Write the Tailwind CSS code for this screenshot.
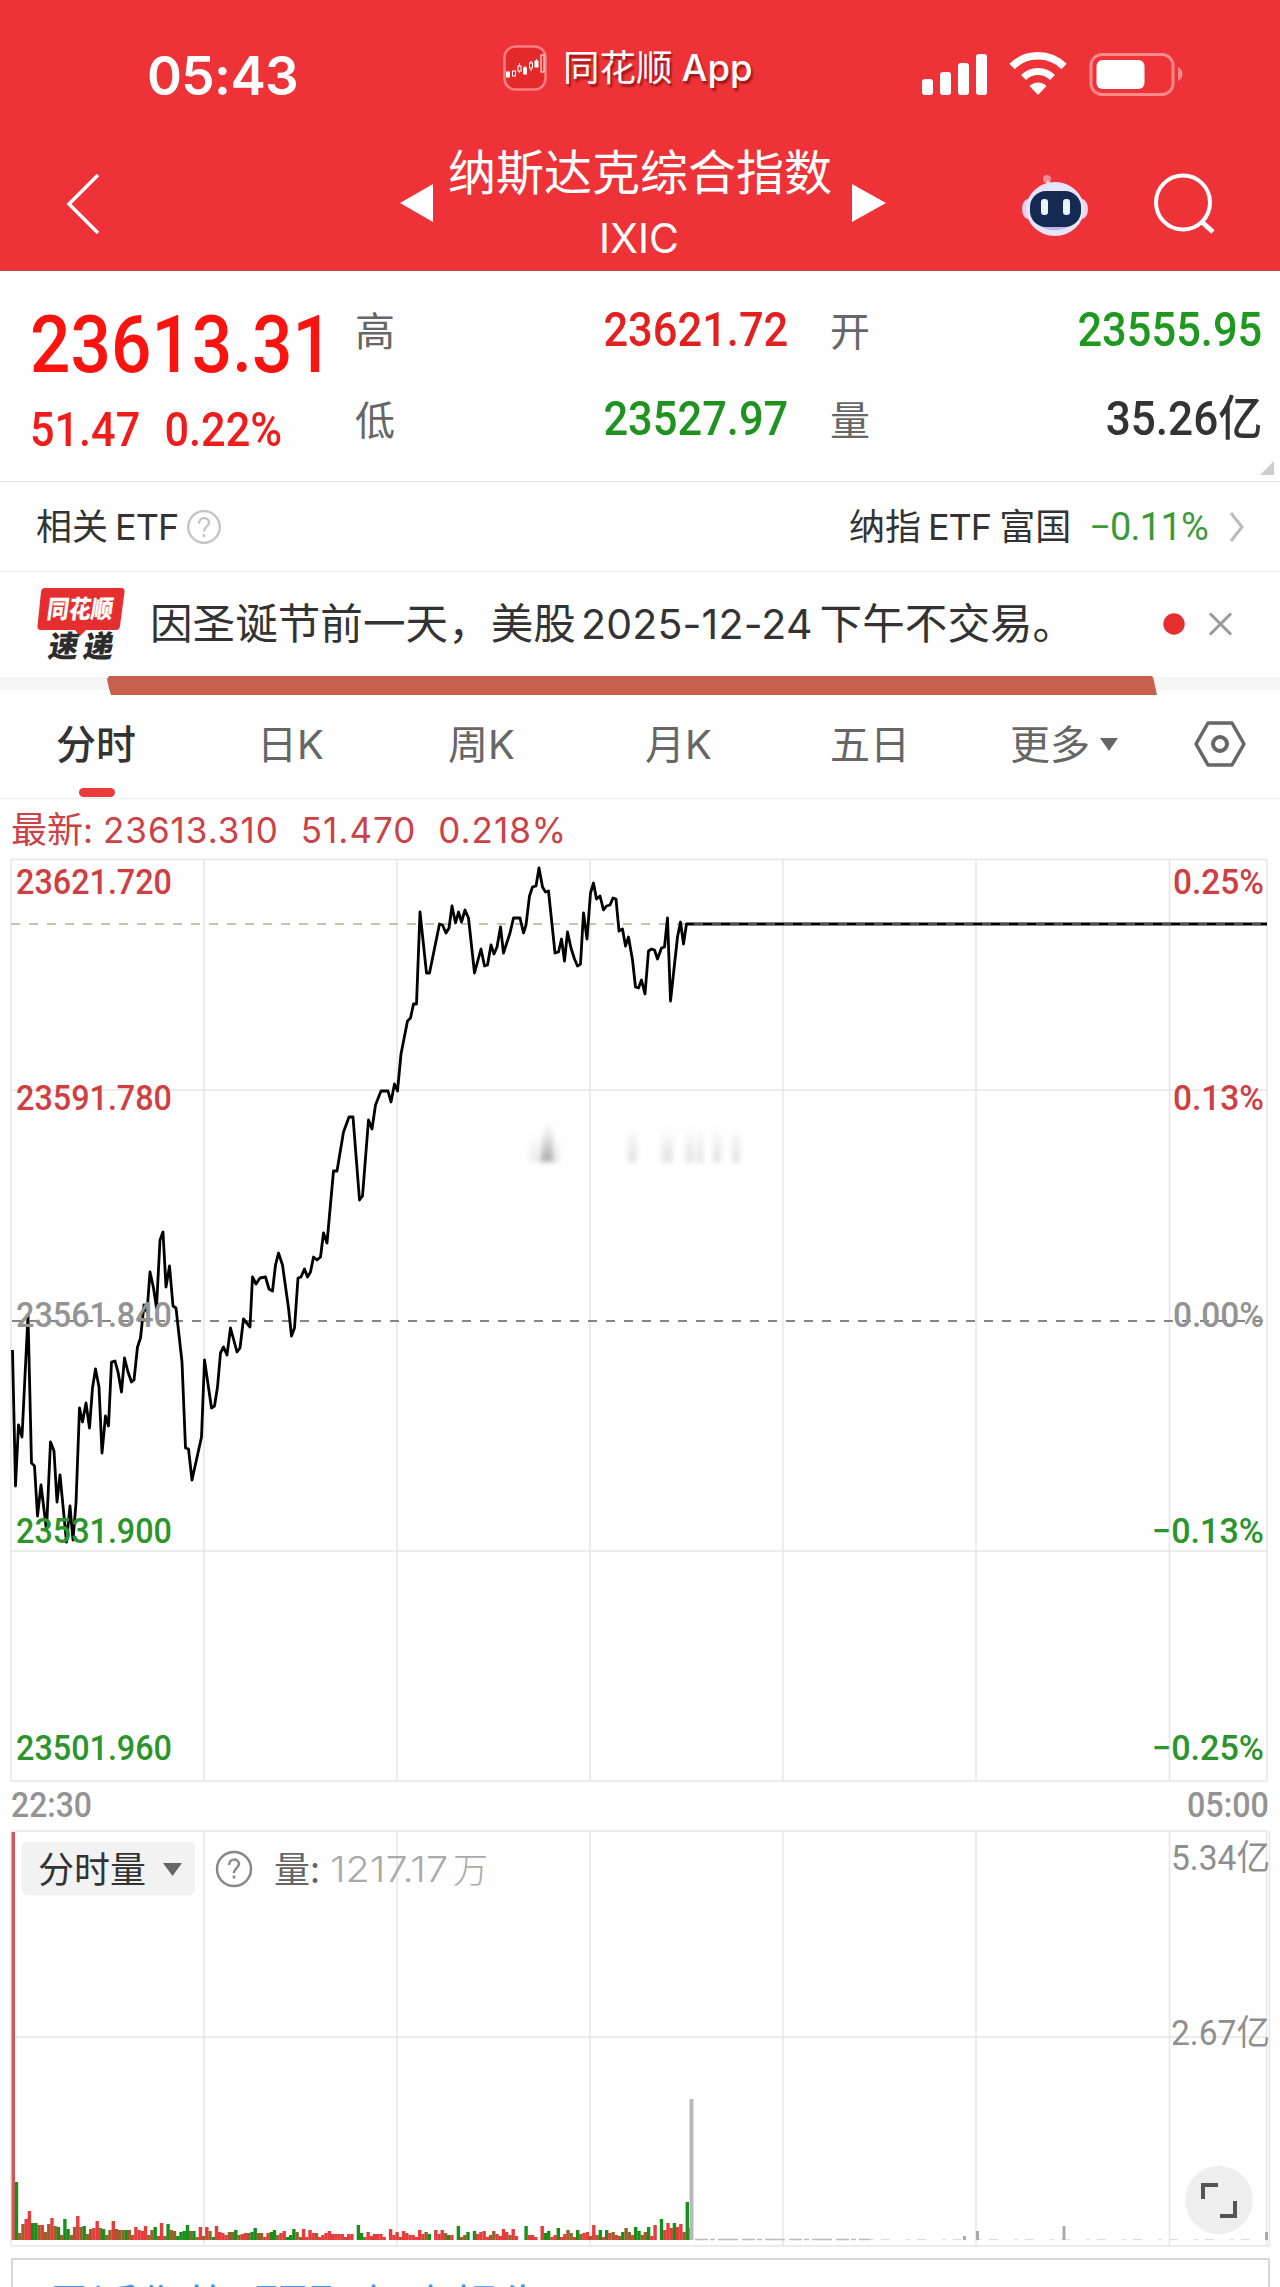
<!DOCTYPE html>
<html lang="zh-CN">
<head>
    <meta charset="UTF-8">
    <meta name="viewport" content="width=device-width, initial-scale=1.0">
    <title>纳斯达克综合指数 IXIC</title>
    <script src="https://cdn.jsdelivr.net/npm/@tailwindcss/browser@4"></script>
</head>
<body class="w-[1280px] h-[2287px] overflow-hidden bg-[#fefefe] font-['Inter','Noto_Sans_CJK_SC',sans-serif] text-[#333]">

    <!-- Header -->
    <header class="h-[271px] bg-[#ed3337] border-b border-[#c2474a] text-white">
        <!-- Status bar -->
        <div class="h-[148px] flex items-start">
            <div class="w-[354px] ml-[147px] mt-[49px] text-[53px] leading-[54px] font-semibold tracking-[-0.600px]">05:43</div>
            <div class="w-[420px] flex items-center mt-[41px] ml-[2px]">
                <svg class="w-[44px] h-[46px] mt-[2px]" viewBox="0 0 44 46" fill="none">
                    <rect x="1.5" y="1.5" width="41" height="43" rx="11" fill="#e22a2a" stroke="#ff8080" stroke-width="2.5"/>
                    <g stroke="#fff" stroke-width="1">
                        <rect x="3.5" y="27" width="3" height="5" fill="#fff"/>
                        <rect x="9.5" y="26" width="3" height="5"/>
                        <path d="M16.500 18v3M16.500 26v2M22 21v2M28 16v2M28 24v2M33.500 14v2"/>
                        <rect x="15" y="21" width="3" height="5"/>
                        <rect x="20.500" y="23" width="3" height="6" fill="#fff"/>
                        <rect x="26.500" y="18" width="3" height="5"/>
                        <rect x="32" y="16" width="3" height="6" fill="#fff"/>
                        <rect x="38" y="10" width="3" height="17"/>
                    </g>
                </svg>
                <div class="ml-[16px] mt-[2px] text-[36.500px] leading-[50px] whitespace-nowrap [text-shadow:2px_3px_2px_rgba(110,0,0,0.6)]">同花顺<span class="ml-[9px] font-medium">App</span></div>
            </div>
            <svg class="w-[264px] h-[46px] mt-[52px] -ml-[3px]" viewBox="920 52 264 46" fill="#fff">
                <rect x="922" y="79" width="11" height="16" rx="3"/>
                <rect x="940" y="72" width="11" height="23" rx="3"/>
                <rect x="958" y="63" width="11" height="32" rx="3"/>
                <rect x="976" y="54" width="11" height="41" rx="3"/>
                <path d="M1038 95l-8.500-9a12 12 0 0 1 17 0z"/>
                <path d="M1023.500 77.500a20.500 20.500 0 0 1 29 0" fill="none" stroke="#fff" stroke-width="7"/>
                <path d="M1012 66.500a37 37 0 0 1 52 0" fill="none" stroke="#fff" stroke-width="7.500"/>
                <rect x="1091" y="54.500" width="82" height="40" rx="11" fill="none" stroke="#ff8a8a" stroke-width="3"/>
                <rect x="1096.500" y="60" width="48" height="29" rx="6"/>
                <path d="M1178 67c6 3 6 11 0 14z" fill="#ff8a8a"/>
            </svg>
        </div>
        <!-- Title bar -->
        <div class="h-[122px] flex items-start">
            <svg class="w-[36px] h-[66px] mt-[23px] ml-[64px]" viewBox="0 0 36 66" fill="none" stroke="#fff" stroke-width="3.500"><path d="M34 4L5 33L34 62"/></svg>
            <svg class="w-[34px] h-[40px] mt-[35px] ml-[300px]" viewBox="0 0 34 40" fill="#fff"><path d="M0 20L33 1V39z"/></svg>
            <div class="w-[382px] ml-[14px] text-center whitespace-nowrap">
                <div class="text-[48px] leading-[50px]">纳斯达克综合指数</div>
                <div class="text-[41px] leading-[46px] mt-[17px]">IXIC</div>
            </div>
            <svg class="w-[34px] h-[40px] mt-[35px] ml-[22px]" viewBox="0 0 34 40" fill="#fff"><path d="M34 20L0 1V39z"/></svg>
            <svg class="w-[68px] h-[64px] mt-[25px] ml-[135px]" viewBox="0 0 68 64">
                <circle cx="26" cy="6" r="4" fill="#f28a94"/>
                <path d="M26 8l4 6" stroke="#f5c3cd" stroke-width="3"/>
                <ellipse cx="7" cy="36" rx="6" ry="10" fill="#e9c9ec"/>
                <ellipse cx="61" cy="36" rx="6" ry="10" fill="#f3d3e8"/>
                <ellipse cx="34" cy="36" rx="29" ry="27" fill="#e6e4fa"/>
                <path d="M12 46a26 24 0 0 0 44 0q-20 14-44 0z" fill="#bfb4f0"/>
                <rect x="9" y="18" width="51" height="36" rx="16" fill="#152a52"/>
                <rect x="20" y="26" width="7" height="16" rx="3" fill="#e8f4ff"/>
                <rect x="42" y="26" width="7" height="16" rx="3" fill="#e8f4ff"/>
            </svg>
            <svg class="w-[64px] h-[64px] mt-[23px] ml-[63px]" viewBox="0 0 64 64" fill="none" stroke="#fff" stroke-width="4"><circle cx="31" cy="31.500" r="27"/><path d="M50 51l11 10" stroke-width="5"/></svg>
        </div>
    </header>

    <!-- Quote summary -->
    <section class="relative h-[211px] flex border-b border-[#e6e6e6] whitespace-nowrap font-['Roboto','Noto_Sans_CJK_SC',sans-serif]">
        <div class="w-[325px] ml-[30px] text-[#fb130f] font-medium">
            <div class="w-[320px] h-[80px] mt-[34px] text-[80px] leading-[80px] origin-left scale-x-[0.890]">23613.31</div>
            <div class="w-[300px] flex mt-[21px] gap-[27px] text-[48px] leading-[48px] origin-left scale-x-[0.900] text-[#ee1c1a]"><span>51.47</span><span>0.22%</span></div>
        </div>
        <div class="w-[433px] mt-[35px]">
            <div class="flex justify-between h-[48px] items-center"><span class="pt-[5px] text-[40px] leading-[48px] text-[#666]">高</span><span class="text-[48px] leading-[48px] origin-right scale-x-[0.905] font-medium text-[#e32020]">23621.72</span></div>
            <div class="flex justify-between h-[48px] items-center mt-[41px]"><span class="pt-[5px] text-[40px] leading-[48px] text-[#666]">低</span><span class="text-[48px] leading-[48px] origin-right scale-x-[0.905] font-medium text-[#1f921f]">23527.97</span></div>
        </div>
        <div class="w-[432px] mt-[35px] ml-[42px]">
            <div class="flex justify-between h-[48px] items-center"><span class="pt-[5px] text-[40px] leading-[48px] text-[#666]">开</span><span class="text-[48px] leading-[48px] origin-right scale-x-[0.905] font-medium text-[#1f981f]">23555.95</span></div>
            <div class="flex justify-between h-[48px] items-center mt-[41px]"><span class="pt-[5px] text-[40px] leading-[48px] text-[#666]">量</span><span class="text-[48px] leading-[48px] origin-right scale-x-[0.920] font-medium">35.26亿</span></div>
        </div>
        <svg class="absolute right-[6px] bottom-[6px] w-[14px] h-[14px]" viewBox="0 0 14 14" fill="#ccc"><path d="M14 0V14H0z"/></svg>
    </section>

    <!-- Related ETF -->
    <section class="h-[90px] flex items-center border-b border-[#eee] pl-[36px] pr-[35px] text-[35px] leading-[44px] whitespace-nowrap">
        <span class="text-[36px]">相关<span class="ml-[7px] tracking-[-1px]">ETF</span></span>
        <svg class="w-[36px] h-[36px] ml-[8px]" viewBox="0 0 36 36" fill="none" stroke="#c4c4c4" stroke-width="2.300"><circle cx="18" cy="18" r="15.800"/><path d="M13 14.500c0-7 10-7 10-1c0 4-5 4-5 9M18 25v3"/></svg>
        <span class="ml-auto text-[36px]">纳指<span class="ml-[7px] mr-[8px] tracking-[-1px]">ETF</span>富国</span>
        <span class="ml-[18px] font-['Roboto'] text-[38px] tracking-[-0.800px] text-[#3a9a3a]">−0.11%</span>
        <svg class="w-[16px] h-[32px] ml-[21px]" viewBox="0 0 16 32" fill="none" stroke="#bbb" stroke-width="3"><path d="M2 2l11 14L2 30"/></svg>
    </section>

    <!-- News flash -->
    <section class="relative h-[105px] flex items-start whitespace-nowrap">
        <svg class="w-[92px] h-[78px] mt-[14px] ml-[36px]" viewBox="36 586 92 78">
            <path d="M45 588H121q4 0 3.500 4L120 626q-.5 4-4 4H86l-6 6l-5-6H41q-4 0-3.500-4L41 592q.5-4 4-4z" fill="#e62e30"/>
            <text x="0" y="0" transform="translate(46 618) skewX(-8)" font-family="Noto Sans CJK SC" font-weight="900" font-size="25" fill="#fff" textLength="66" lengthAdjust="spacingAndGlyphs">同花顺</text>
            <text x="0" y="0" transform="translate(47 657) skewX(-10)" font-family="Noto Sans CJK SC" font-weight="900" font-size="30" fill="#2c2c2c" textLength="65" lengthAdjust="spacing">速递</text>
        </svg>
        <div class="ml-[22px] mt-[27px] text-[42.600px] leading-[50px]">因圣诞节前一天，美股<span class="ml-[5px] mr-[7px] text-[41px] tracking-[0.200px]">2025-12-24</span>下午不交易。</div>
        <svg class="absolute left-[1160px] top-[38px] w-[76px] h-[28px]" viewBox="0 0 76 28"><circle cx="14" cy="14" r="10.700" fill="#e63030"/><path d="M50 3.500l21 21M71 3.500l-21 21" stroke="#999" stroke-width="3"/></svg>
    </section>

    <!-- Divider with brush stroke -->
    <div class="relative h-[13px] bg-[#f5f5f5]">
        <svg class="absolute left-[106px] -top-[2px] w-[1052px] h-[22px]" viewBox="0 0 1052 22"><path d="M3 1H1045q2 0 2.500 3L1051 20H5q-3-9-4-16z" fill="#c8604e"/></svg>
    </div>

    <!-- Period tabs -->
    <nav class="relative h-[109px] border-b border-[#ededed] text-[40px] leading-[50px] text-[#666] whitespace-nowrap flex items-start pt-[30px]">
        <span class="ml-[56px] w-[201px] font-medium text-[#333]">分时</span>
        <span class="w-[191px]">日K</span>
        <span class="w-[197px]">周K</span>
        <span class="w-[185px]">月K</span>
        <span class="w-[180px]">五日</span>
        <span class="w-[90px]">更多</span>
        <svg class="w-[18px] h-[13px] mt-[18px]" viewBox="0 0 18 13" fill="#666"><path d="M0 0H18L9 13z"/></svg>
        <svg class="w-[52px] h-[46px] mt-[1px] ml-[76px]" viewBox="0 0 52 46" fill="none" stroke="#666" stroke-width="3.500"><path d="M14 2H38L50 23L38 44H14L2 23z" stroke-linejoin="round"/><circle cx="26" cy="23" r="7" stroke-width="4"/></svg>
        <i class="absolute left-[79px] bottom-[1px] w-[36px] h-[9px] rounded-full bg-[#ea3c3a]"></i>
    </nav>

    <!-- Latest line -->
    <div class="h-[60px] flex items-center pl-[11px] pt-[2px] gap-[22px] text-[35px] leading-[44px] tracking-[1px] text-[#cb4145] whitespace-nowrap">
        <span><span class="text-[36px] tracking-normal">最新</span><span class="tracking-normal">: </span>23613.310</span><span>51.470</span><span>0.218%</span>
    </div>

    <!-- Charts -->
    <svg class="block w-[1280px] h-[1429px] -mt-[1px]" viewBox="0 858 1280 1429" fill="none">
        <g stroke="#e6e6e6" stroke-width="1.500">
            <path d="M11 859.500H1267M11 1090H1267M11 1551H1267M11 1781H1267M11 859.500V1781M204 859.500V1781M397 859.500V1781M590 859.500V1781M783 859.500V1781M976 859.500V1781M1169.500 859.500V1781M1267 859.500V1781"/>
            <path d="M11 1831H1267M11 2037H1267M11 2246H1269M11 1831V2246M204 1831V2246M397 1831V2246M590 1831V2246M783 1831V2246M976 1831V2246M1169.500 1831V2246M1266.500 1831V2246M1269.500 1831V2246"/>
        </g>
        <!-- faint smudge -->
        <defs>
            <linearGradient id="fade" x1="0" y1="0" x2="0" y2="1"><stop offset="0" stop-color="#777" stop-opacity="0"/><stop offset="1" stop-color="#777"/></linearGradient>
        </defs>
        <g fill="url(#fade)" style="filter:blur(2.500px)">
            <path d="M544 1124h9v38h-12z" opacity=".55"/><path d="M530 1135h30v27h-30z" opacity=".15"/>
            <path d="M628 1128h9v34h-9zM662 1128h11v34h-11zM686 1128h8v34h-8zM697 1128h6v34h-6zM713 1128h8v34h-8zM732 1128h8v34h-8z" opacity=".22"/>
        </g>
        <path d="M11 924H1267" stroke="#b9ae98" stroke-width="1.500" stroke-dasharray="9 9"/>
        <path d="M12 1321H1267" stroke="#858585" stroke-width="2" stroke-dasharray="9 9"/>

        <polyline stroke="#000" stroke-width="2.800" stroke-linejoin="round" points="12.5,1350 15.5,1486 18.5,1425 22,1437 28,1315 31.5,1463 34.5,1466 37.5,1516 41,1485 46.5,1530 50.5,1442 54,1451 57,1502 60,1475 66.5,1542 70,1506 73,1540 76,1503 79.5,1408 82.5,1422 86,1403 89.5,1428 92.5,1388 95.5,1369 99,1387 102,1453 105.5,1416 108.5,1426 111.5,1362 115,1361 118,1372 121.5,1392 124.5,1358 128,1372 131.5,1382 134,1380 137.5,1347 140.5,1338 144,1305 147,1312 150,1272 153.5,1288 156.5,1308 160,1240 163,1232 166,1287 169.5,1266 173,1306 176,1308 182,1362 185.5,1448 188.5,1449 192,1480 201.5,1437 204.5,1360 211.5,1408 214.5,1406 217.5,1387 220.5,1353 223.5,1347 227,1355 230.5,1328 237,1352 240,1348 243.5,1319 250,1327 252.5,1277 256,1284 260,1278 265.5,1277 269,1289 272.5,1291 275.5,1265 278.5,1253 282.5,1265 288.5,1308 291.5,1336 294.5,1328 298,1278 301,1277 304.5,1269 307.5,1277 310.5,1272 313.5,1257 317,1260 320.5,1257 323.5,1233 327,1243 333.5,1171 337,1171 343.5,1132 349,1117 353,1117 359.5,1200 362.5,1196 368.5,1120 372,1129 375.5,1105 381,1091 388,1091 391,1102 394.5,1084 397.5,1091 401,1054 407.5,1021 410.5,1018 413.5,1004 416.500,1004 420,912 426.5,973 429.5,973 439.5,924 442.5,925 446,933 449,928 452,906 455.5,923 458.5,912 461.5,922 465,910 468.5,918 474.5,973 481,949 484.5,966 487.5,965 491,945 494,954 497,947 500.5,927 503.5,953 510,933 513.5,918 520,918 523.5,933 526,925 529.5,896 532.5,887 536,886 539,868 542.5,887 545.5,892 548.5,891 555,953 558.5,952 561.5,939 564.5,961 567.5,932 571,948 574.5,959 577.5,966 580.5,964 583.5,913 587,939 590.5,893 593.5,883 596.5,899 600,896 603.5,910 606.5,906 610,905 613,898 616,899 619,931 622.5,929 625.5,946 628.5,937 632.5,960 635.5,987 638.5,988 641.5,980 645,994 648.5,951 651.5,949 654.5,950 657.5,959 661.5,948 664.5,947 667.5,918 670.5,1001 677.5,937 680.5,922 683.5,944 686.5,924 1267,924"/>
        <path d="M694 924H1267" stroke="#9a9a9a" stroke-width="1" stroke-dasharray="9 9"/>

        <!-- axis labels -->
        <g font-family="Roboto" font-weight="500" font-size="35">
            <g fill="#cf3f42">
                <text x="16" y="894" textLength="156" lengthAdjust="spacingAndGlyphs">23621.720</text>
                <text x="16" y="1110" textLength="156" lengthAdjust="spacingAndGlyphs">23591.780</text>
                <text x="1173" y="894" textLength="91" lengthAdjust="spacingAndGlyphs">0.25%</text>
                <text x="1173" y="1110" textLength="91" lengthAdjust="spacingAndGlyphs">0.13%</text>
            </g>
            <g fill="#939393">
                <text x="16" y="1327" textLength="156" lengthAdjust="spacingAndGlyphs">23561.840</text>
                <text x="1173" y="1327" textLength="91" lengthAdjust="spacingAndGlyphs">0.00%</text>
                <text x="11" y="1817" textLength="81" lengthAdjust="spacingAndGlyphs">22:30</text>
                <text x="1187" y="1817" textLength="82" lengthAdjust="spacingAndGlyphs">05:00</text>
            </g>
            <g fill="#2b942b">
                <text x="16" y="1543" textLength="156" lengthAdjust="spacingAndGlyphs">23531.900</text>
                <text x="16" y="1760" textLength="156" lengthAdjust="spacingAndGlyphs">23501.960</text>
                <text x="1152" y="1543" textLength="112" lengthAdjust="spacingAndGlyphs">−0.13%</text>
                <text x="1152" y="1760" textLength="112" lengthAdjust="spacingAndGlyphs">−0.25%</text>
            </g>
        </g>
        <g font-family="Roboto, Noto Sans CJK SC" font-size="35" fill="#8f8f8f">
            <text x="1171" y="1870" textLength="99" lengthAdjust="spacingAndGlyphs">5.34亿</text>
            <text x="1171" y="2045" textLength="99" lengthAdjust="spacingAndGlyphs">2.67亿</text>
        </g>

        <!-- volume header -->
        <rect x="22" y="1842" width="173" height="53" rx="5" fill="#f2f2f2"/>
        <text x="38" y="1883" font-family="Noto Sans CJK SC" font-size="36" fill="#333">分时量</text>
        <path d="M163 1863H182L172.500 1876z" fill="#666"/>
        <g stroke="#888" stroke-width="2.500"><circle cx="234" cy="1869" r="17"/><path d="M229 1865c0-7 10-7 10-1c0 4-5 4-5 9M234 1875.500v3"/></g>
        <text x="274" y="1883" font-family="Noto Sans CJK SC" font-size="36" fill="#666">量:</text>
        <text x="330" y="1882" font-family="Inter" font-weight="300" font-size="35" fill="#aaa" textLength="118" lengthAdjust="spacingAndGlyphs">1217.17</text>
        <text x="453" y="1883" font-family="Noto Sans CJK SC" font-weight="300" font-size="35" fill="#aaa">万</text>

        <g id="volume"></g>
        <path d="M691.500 2099V2240" stroke="#b9b9b9" stroke-width="4"/>
        <path d="M695 2239.500H870" stroke="#bbb" stroke-width="1.500" stroke-dasharray="13 2 5 3 20 4"/>
        <path d="M870 2239.500H1267" stroke="#ddd" stroke-width="1" stroke-dasharray="4 7 9 16"/>
        <path d="M964.500 2236v4M977.500 2231v9M1064 2226v14M1266.500 2232v8" stroke="#aaa" stroke-width="3"/>

        <!-- fullscreen button -->
        <circle cx="1219" cy="2200" r="34" fill="#eee"/>
        <path d="M1203 2199V2185H1218M1235 2201V2216H1220" stroke="#555" stroke-width="4"/>

        <!-- bottom card -->
        <path d="M12 2287V2259H1269V2287" stroke="#ccc" stroke-width="1.500" fill="#fff"/>
        <text x="46" y="2323" font-family="Noto Sans CJK SC" font-size="46" fill="#4a90e2">最近你的</text>
        <text x="252" y="2320" font-family="Noto Sans CJK SC" font-size="46" fill="#4a90e2">ETF</text>
        <text x="362" y="2323" font-family="Noto Sans CJK SC" font-size="46" fill="#4a90e2">如高损失</text>
    </svg>

    <script>
        // keyed by the minute a run starts at; r = up, g = down, b = overlap of both, number = bar height
        const runs = {
            0: 'r408 g58 b7 b16 r21 r29 g17 g17 b15 r15 b8 b16 r22 b14 g13 b5 g21 g11 b5 b13 r24 b13 g14 b6 b11 r12 r19 b12 g11 b5 b10 r19 b11 b10 b10 g10 b10 r5 r13 r10 r9 r14 b5 b10 g13 b4 r17 b4 g16 b10 b9 g4 g8 g9 g15 b9 g9 b3 r13 b4 r13 b9 g3 r14 r8 r7 r5 b8 b8 g10 b5 r6 r7 b7 g8 g12 b7 b7 r3 r7 g8 g10 b5 r7 r9 g3 g5 g11 b8 b3 r11 r3 r10 r7 b7 r3 r5 r7 r9 r6 r6 r6 r6 r3 r6 r6',
            107: 'g15 g7 b3 r8 r4 r6 r6 r6 r3',
            117: 'r11 r5 r8 r3 r9 r7 r5 r5 r3 r10 r6 b8 g6',
            131: 'r10 r6 r10 b7 g5 r5',
            138: 'g14 b3 b5 g8',
            143: 'g9 r6 r8 r9 r3 b5 b9 r6 r4 r11 r8 b5 r11 r4',
            159: 'g14 r5 r5 r3',
            164: 'r14 g7 g9 r3 r5 g12 r3 r6 b10 b7 r3 g10 b6 r7 r8 b4 r15 b5 g10 r3 g10 r7 b8 r5 b4 g8 b12 b8 r5 g13 g9 b5 b8 g13 r4 r15',
            201: 'g21 r10 r17 r12 g17 r13 r16 b8 g38 r12'
        };
        const fills = { r: '#e63c3c', g: '#17901b', b: '#98602b' };
        let out = '';
        for (const [start, list] of Object.entries(runs)) {
            list.split(' ').forEach((bar, n) => {
                const i = Number(start) + n;
                const h = Number(bar.slice(1));
                const fill = i === 0 ? '#d4545a' : fills[bar[0]];
                out += `<rect x="${(11.6 + i * 3.225).toFixed(1)}" y="${2240 - h}" width="3.4" height="${h}" fill="${fill}"/>`;
            });
        }
        document.getElementById('volume').innerHTML = out;
    </script>
</body>
</html>
